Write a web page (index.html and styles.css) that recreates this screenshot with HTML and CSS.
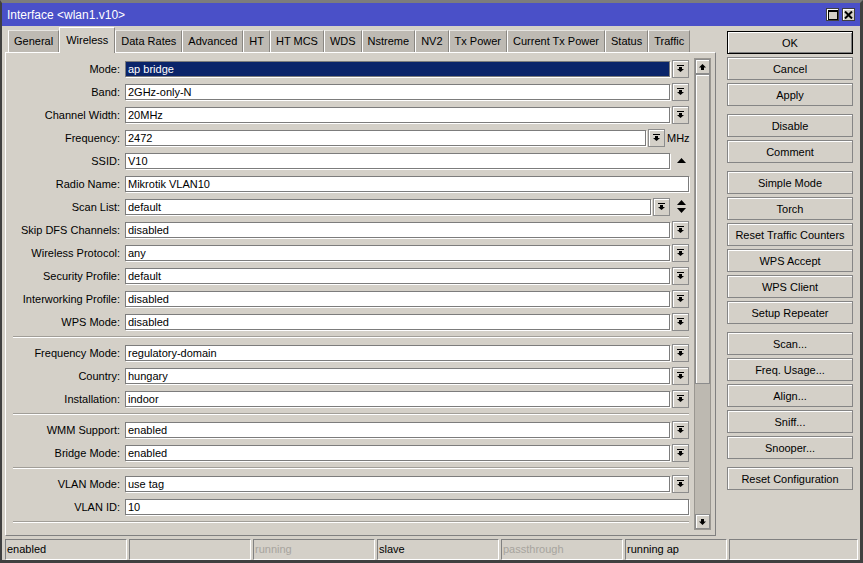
FILE: index.html
```html
<!DOCTYPE html>
<html>
<head>
<meta charset="utf-8">
<link rel="stylesheet" href="styles.css">
</head>
<body>
<div class="window">
  <div class="titlebar">
    <span class="title">Interface &lt;wlan1.v10&gt;</span>
    <div class="tb-btns">
      <span class="tbb"><svg width="10" height="10" viewBox="0 0 10 10" shape-rendering="crispEdges"><rect x="0.5" y="0.5" width="9" height="9" fill="none" stroke="#000"/><rect x="0" y="0" width="10" height="2" fill="#000"/></svg></span>
      <span class="tbb"><svg width="9" height="8" viewBox="0 0 9 8"><path d="M1 0.5L8 7.5M8 0.5L1 7.5" stroke="#000" stroke-width="2"/></svg></span>
    </div>
  </div>
  <div class="main">
    <div class="leftcol">
      <div class="tabs">
        <span class="tab">General</span>
        <span class="tab active">Wireless</span>
        <span class="tab">Data Rates</span>
        <span class="tab">Advanced</span>
        <span class="tab">HT</span>
        <span class="tab">HT MCS</span>
        <span class="tab">WDS</span>
        <span class="tab">Nstreme</span>
        <span class="tab">NV2</span>
        <span class="tab">Tx Power</span>
        <span class="tab">Current Tx Power</span>
        <span class="tab">Status</span>
        <span class="tab">Traffic</span>
      </div>
      <div class="panel">
        <div class="form">
          <div class="row"><span class="lbl">Mode:</span><div class="fld"><div class="inp sel">ap bridge</div><span class="dd"><svg class="ico" width="7" height="7" viewBox="0 0 7 7"><rect x="0" y="0" width="7" height="1"/><rect x="2" y="2" width="3" height="2"/><path d="M0 4h7l-3.5 3z"/></svg></span></div></div>
          <div class="row"><span class="lbl">Band:</span><div class="fld"><div class="inp">2GHz-only-N</div><span class="dd"><svg class="ico" width="7" height="7" viewBox="0 0 7 7"><rect x="0" y="0" width="7" height="1"/><rect x="2" y="2" width="3" height="2"/><path d="M0 4h7l-3.5 3z"/></svg></span></div></div>
          <div class="row"><span class="lbl">Channel Width:</span><div class="fld"><div class="inp">20MHz</div><span class="dd"><svg class="ico" width="7" height="7" viewBox="0 0 7 7"><rect x="0" y="0" width="7" height="1"/><rect x="2" y="2" width="3" height="2"/><path d="M0 4h7l-3.5 3z"/></svg></span></div></div>
          <div class="row"><span class="lbl">Frequency:</span><div class="fld"><div class="inp">2472</div><span class="dd"><svg class="ico" width="7" height="7" viewBox="0 0 7 7"><rect x="0" y="0" width="7" height="1"/><rect x="2" y="2" width="3" height="2"/><path d="M0 4h7l-3.5 3z"/></svg></span><span class="unit">MHz</span></div></div>
          <div class="row"><span class="lbl">SSID:</span><div class="fld"><div class="inp">V10</div><span class="slot"><svg width="9" height="5" viewBox="0 0 9 5"><path d="M0 5h9L4.5 0z"/></svg></span></div></div>
          <div class="row"><span class="lbl">Radio Name:</span><div class="fld"><div class="inp">Mikrotik VLAN10</div></div></div>
          <div class="row"><span class="lbl">Scan List:</span><div class="fld"><div class="inp">default</div><span class="dd"><svg class="ico" width="7" height="7" viewBox="0 0 7 7"><rect x="0" y="0" width="7" height="1"/><rect x="2" y="2" width="3" height="2"/><path d="M0 4h7l-3.5 3z"/></svg></span><span class="slot"><svg width="9" height="13" viewBox="0 0 9 13"><path d="M0 5h9L4.5 0z"/><path d="M0 8h9L4.5 13z"/></svg></span></div></div>
          <div class="row"><span class="lbl">Skip DFS Channels:</span><div class="fld"><div class="inp">disabled</div><span class="dd"><svg class="ico" width="7" height="7" viewBox="0 0 7 7"><rect x="0" y="0" width="7" height="1"/><rect x="2" y="2" width="3" height="2"/><path d="M0 4h7l-3.5 3z"/></svg></span></div></div>
          <div class="row"><span class="lbl">Wireless Protocol:</span><div class="fld"><div class="inp">any</div><span class="dd"><svg class="ico" width="7" height="7" viewBox="0 0 7 7"><rect x="0" y="0" width="7" height="1"/><rect x="2" y="2" width="3" height="2"/><path d="M0 4h7l-3.5 3z"/></svg></span></div></div>
          <div class="row"><span class="lbl">Security Profile:</span><div class="fld"><div class="inp">default</div><span class="dd"><svg class="ico" width="7" height="7" viewBox="0 0 7 7"><rect x="0" y="0" width="7" height="1"/><rect x="2" y="2" width="3" height="2"/><path d="M0 4h7l-3.5 3z"/></svg></span></div></div>
          <div class="row"><span class="lbl">Interworking Profile:</span><div class="fld"><div class="inp">disabled</div><span class="dd"><svg class="ico" width="7" height="7" viewBox="0 0 7 7"><rect x="0" y="0" width="7" height="1"/><rect x="2" y="2" width="3" height="2"/><path d="M0 4h7l-3.5 3z"/></svg></span></div></div>
          <div class="row"><span class="lbl">WPS Mode:</span><div class="fld"><div class="inp">disabled</div><span class="dd"><svg class="ico" width="7" height="7" viewBox="0 0 7 7"><rect x="0" y="0" width="7" height="1"/><rect x="2" y="2" width="3" height="2"/><path d="M0 4h7l-3.5 3z"/></svg></span></div></div>
          <div class="sep"></div>
          <div class="row"><span class="lbl">Frequency Mode:</span><div class="fld"><div class="inp">regulatory-domain</div><span class="dd"><svg class="ico" width="7" height="7" viewBox="0 0 7 7"><rect x="0" y="0" width="7" height="1"/><rect x="2" y="2" width="3" height="2"/><path d="M0 4h7l-3.5 3z"/></svg></span></div></div>
          <div class="row"><span class="lbl">Country:</span><div class="fld"><div class="inp">hungary</div><span class="dd"><svg class="ico" width="7" height="7" viewBox="0 0 7 7"><rect x="0" y="0" width="7" height="1"/><rect x="2" y="2" width="3" height="2"/><path d="M0 4h7l-3.5 3z"/></svg></span></div></div>
          <div class="row"><span class="lbl">Installation:</span><div class="fld"><div class="inp">indoor</div><span class="dd"><svg class="ico" width="7" height="7" viewBox="0 0 7 7"><rect x="0" y="0" width="7" height="1"/><rect x="2" y="2" width="3" height="2"/><path d="M0 4h7l-3.5 3z"/></svg></span></div></div>
          <div class="sep"></div>
          <div class="row"><span class="lbl">WMM Support:</span><div class="fld"><div class="inp">enabled</div><span class="dd"><svg class="ico" width="7" height="7" viewBox="0 0 7 7"><rect x="0" y="0" width="7" height="1"/><rect x="2" y="2" width="3" height="2"/><path d="M0 4h7l-3.5 3z"/></svg></span></div></div>
          <div class="row"><span class="lbl">Bridge Mode:</span><div class="fld"><div class="inp">enabled</div><span class="dd"><svg class="ico" width="7" height="7" viewBox="0 0 7 7"><rect x="0" y="0" width="7" height="1"/><rect x="2" y="2" width="3" height="2"/><path d="M0 4h7l-3.5 3z"/></svg></span></div></div>
          <div class="sep"></div>
          <div class="row"><span class="lbl">VLAN Mode:</span><div class="fld"><div class="inp">use tag</div><span class="dd"><svg class="ico" width="7" height="7" viewBox="0 0 7 7"><rect x="0" y="0" width="7" height="1"/><rect x="2" y="2" width="3" height="2"/><path d="M0 4h7l-3.5 3z"/></svg></span></div></div>
          <div class="row"><span class="lbl">VLAN ID:</span><div class="fld"><div class="inp">10</div></div></div>
          <div class="sep"></div>
        </div>
        <div class="vscroll">
          <span class="sbtn"><svg width="7" height="6" viewBox="0 0 7 6"><path d="M3.5 0L7 3.5H0z"/><rect x="2" y="3" width="3" height="3"/></svg></span>
          <span class="thumb"></span>
          <span class="track"></span>
          <span class="sbtn"><svg width="7" height="6" viewBox="0 0 7 6"><path d="M3.5 6L7 2.5H0z"/><rect x="2" y="0" width="3" height="3"/></svg></span>
        </div>
      </div>
    </div>
    <div class="rightcol">
      <span class="btn default">OK</span>
      <span class="btn">Cancel</span>
      <span class="btn">Apply</span>
      <span class="btn grp">Disable</span>
      <span class="btn">Comment</span>
      <span class="btn grp">Simple Mode</span>
      <span class="btn">Torch</span>
      <span class="btn">Reset Traffic Counters</span>
      <span class="btn">WPS Accept</span>
      <span class="btn">WPS Client</span>
      <span class="btn">Setup Repeater</span>
      <span class="btn grp">Scan...</span>
      <span class="btn">Freq. Usage...</span>
      <span class="btn">Align...</span>
      <span class="btn">Sniff...</span>
      <span class="btn">Snooper...</span>
      <span class="btn grp">Reset Configuration</span>
    </div>
  </div>
  <div class="statusbar">
    <span class="cell">enabled</span>
    <span class="cell"></span>
    <span class="cell dim">running</span>
    <span class="cell">slave</span>
    <span class="cell dim">passthrough</span>
    <span class="cell">running ap</span>
    <span class="cell"></span>
  </div>
</div>
</body>
</html>
```

FILE: styles.css
```css
* { box-sizing: border-box; }
html, body { margin: 0; padding: 0; }
body {
  font-family: "Liberation Sans", Arial, sans-serif;
  font-size: 11px;
  color: #000;
  background: #d4d0c8;
}
.window {
  width: 863px;
  height: 563px;
  background: #d4d0c8;
  border-style: solid;
  border-width: 3px 3px 3px 2px;
  border-color: #7c7c7c #404040 #404040 #404040;
  display: flex;
  flex-direction: column;
}
.titlebar {
  height: 23px;
  background: #4a50c8;
  color: #fff;
  display: flex;
  align-items: center;
  justify-content: space-between;
  padding: 0 5px 0 5px;
}
.title { font-size: 12px; padding-left: 0; }
.tb-btns { display: flex; gap: 3px; }
.tbb {
  width: 13px;
  height: 13px;
  background: #d4d0c8;
  border: 1px solid #404040;
  box-shadow: inset 1px 1px 0 #fff;
  display: flex;
  align-items: center;
  justify-content: center;
}
.main {
  height: 510px;
  display: flex;
}
.leftcol {
  width: 711px;
  margin-left: 3px;
  display: flex;
  flex-direction: column;
}
.tabs {
  height: 26px;
  display: flex;
  align-items: flex-end;
  padding-left: 3px;
}
.tab {
  height: 22px;
  line-height: 20px;
  padding: 0 5px;
  background: #bebab3;
  border-top: 1px solid #e8e6e2;
  border-left: 1px solid #fff;
  border-right: 1px solid #8a8782;
  white-space: nowrap;
}
.tab.active {
  height: 26px;
  line-height: 24px;
  background: #d4d0c8;
  border-top: 1px solid #fff;
  margin-bottom: -1px;
  position: relative;
  z-index: 1;
  padding: 0 6px;
}
.panel {
  height: 484px;
  display: flex;
  border-style: solid;
  border-width: 1px;
  border-color: #fff #808080 #808080 #fff;
}
.form {
  flex: 1;
  padding: 4px 0 0 7px;
}
.row {
  height: 23px;
  display: flex;
  align-items: center;
}
.lbl {
  width: 107px;
  text-align: right;
  margin-right: 5px;
  white-space: nowrap;
}
.fld {
  flex: 1;
  display: flex;
  align-items: center;
  gap: 2px;
}
.inp {
  flex: 1;
  height: 16px;
  line-height: 14px;
  background: #fff;
  border: 1px solid #7c7c7c;
  box-shadow: 1px 1px 0 #fff;
  padding-left: 2px;
  white-space: nowrap;
}
.inp.sel {
  background: #0a246a;
  color: #fff;
}
.dd {
  width: 17px;
  height: 18px;
  background: #d4d0c8;
  border: 1px solid #8c8c8c;
  box-shadow: inset 1px 1px 0 #fff;
  display: flex;
  align-items: center;
  justify-content: center;
}
.ico { display: block; }
.slot {
  width: 17px;
  height: 18px;
  display: flex;
  align-items: center;
  justify-content: center;
  padding-left: 2px;
}
.unit { width: 22px; }
.sep {
  margin: 3px 0;
  border-top: 1px solid #a19e98;
  border-bottom: 1px solid #fff;
}
.vscroll {
  width: 17px;
  margin: 5px 4px 5px 5px;
  border: 1px solid #9a9791;
  display: flex;
  flex-direction: column;
  background: #bdb9b1;
}
.sbtn {
  height: 15px;
  background: #d4d0c8;
  border: 1px solid #8c8c8c;
  box-shadow: inset 1px 1px 0 #fff;
  display: flex;
  align-items: center;
  justify-content: center;
}
.thumb {
  height: 310px;
  background: #d4d0c8;
  border: 1px solid #8c8c8c;
  box-shadow: inset 1px 1px 0 #fff;
}
.track { flex: 1; }
.rightcol {
  width: 126px;
  margin-left: 11px;
  padding-top: 5px;
  display: flex;
  flex-direction: column;
  gap: 3px;
}
.btn {
  height: 23px;
  display: flex;
  align-items: center;
  justify-content: center;
  border: 1px solid #858585;
  box-shadow: inset 1px 1px 0 #fff;
  white-space: nowrap;
}
.btn.default {
  border: 1px solid #000;
  box-shadow: inset 1px 1px 0 #fff, inset -1px -1px 0 #808080;
}
.btn.grp { margin-top: 5px; }
.statusbar {
  margin-top: 3px;
  height: 21px;
  padding-left: 3px;
  display: grid;
  grid-template-columns: 122px 122px 122px 122px 122px 102px 129px;
  column-gap: 2px;
}
.cell {
  border-style: solid;
  border-width: 1px;
  border-color: #808080 #fff #fff #808080;
  line-height: 19px;
  padding-left: 1px;
  white-space: nowrap;
}
.cell.dim { color: #a7a49e; }
```
